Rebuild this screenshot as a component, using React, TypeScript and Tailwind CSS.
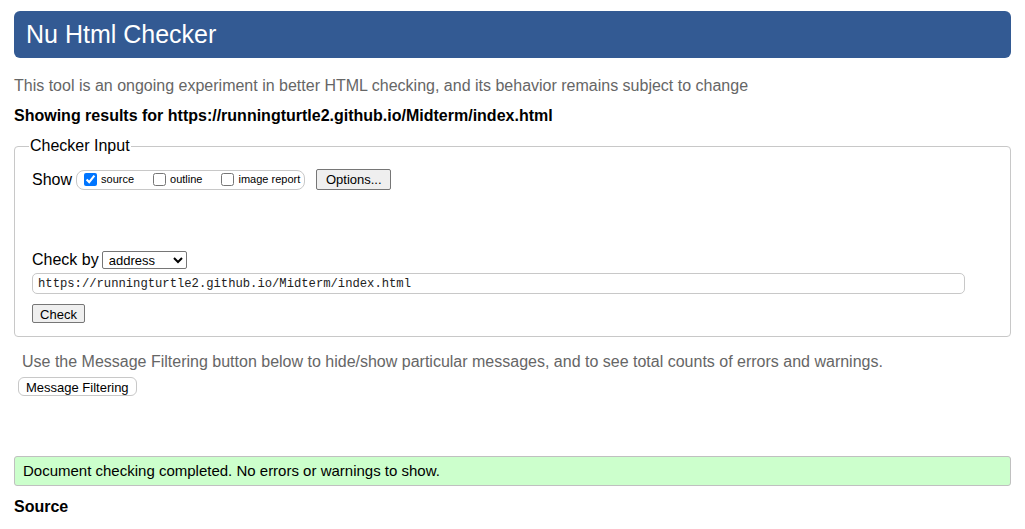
import React, { useState } from 'react';

const sans = { fontFamily: '"Liberation Sans", Arial, sans-serif' };

const ShowToggles: React.FC = () => {
    const [show, setShow] = useState({ source: true, outline: false, image: false });

    return (
        <span className="inline-flex h-[20px] items-center gap-[19px] rounded-[8px] border border-[#c8c8c8] pl-[7px] pr-[4px] text-[11px] text-black">
            <label className="flex items-center gap-[4px]">
                <input type="checkbox" className="m-0 h-[13px] w-[13px] accent-[#0075ff]" checked={show.source} onChange={e => setShow({ ...show, source: e.target.checked })} />
                source
            </label>
            <label className="flex items-center gap-[4px]">
                <input type="checkbox" className="m-0 h-[13px] w-[13px]" checked={show.outline} onChange={e => setShow({ ...show, outline: e.target.checked })} />
                outline
            </label>
            <label className="flex items-center gap-[4px]">
                <input type="checkbox" className="m-0 h-[13px] w-[13px]" checked={show.image} onChange={e => setShow({ ...show, image: e.target.checked })} />
                image report
            </label>
        </span>
    );
};

const App: React.FC = () => {
    const [url, setUrl] = useState('https://runningturtle2.github.io/Midterm/index.html');

    return (
        <div className="min-h-[529px] bg-white px-[14px] pt-[11px] text-[16px] text-black" style={sans}>
            <h1 className="flex h-[47px] items-center rounded-[6px] bg-[#335a93] pl-[12px] text-[25px] text-white">
                Nu Html Checker
            </h1>

            <p className="mt-[18px] leading-[19px] text-[#666]">
                This tool is an ongoing experiment in better HTML checking, and its behavior remains subject to change
            </p>
            <p className="mt-[11px] font-bold leading-[19px]">
                Showing results for https://runningturtle2.github.io/Midterm/index.html
            </p>

            <fieldset className="mt-[12px] rounded-[4px] border border-[#c8c8c8] px-[17px] pb-[13px] pt-[14px]">
                <legend className="-ml-[3px] px-px leading-[18px]">Checker Input</legend>

                <div className="flex h-[21px] items-center">
                    <span className="mr-[4px]">Show</span>
                    <ShowToggles />
                    <button className="ml-[11px] h-[21px] w-[75px] rounded-[2px] border border-[#767676] bg-[#efefef] text-[13px]">
                        Options...
                    </button>
                </div>

                <div className="mt-[61px] flex h-[18px] items-center">
                    <span className="mr-[3px]">Check by</span>
                    <select className="h-[18px] w-[85px] rounded-[2px] border border-[#767676] bg-white pl-[2px] text-[13px]">
                        <option>address</option>
                        <option>file upload</option>
                        <option>text input</option>
                    </select>
                </div>

                <input
                    className="mt-[4px] block h-[21px] w-[933px] rounded-[5px] border border-[#c8c8c8] px-[5px] text-[12.2px] text-[#222]"
                    style={{ fontFamily: '"Liberation Mono", "Courier New", monospace' }}
                    value={url}
                    onChange={e => setUrl(e.target.value)}
                />

                <button className="mt-[10px] block h-[19px] w-[53px] rounded-[2px] border border-[#767676] bg-[#efefef] text-[13px]">
                    Check
                </button>
            </fieldset>

            <p className="ml-[8px] mt-[15px] leading-[19px] text-[#666]">
                Use the Message Filtering button below to hide/show particular messages, and to see total counts of errors and warnings.
            </p>
            <button className="ml-[4px] mt-[6px] h-[19px] rounded-[6px] border border-[#c8c8c8] bg-white px-[7px] text-[13px]">
                Message Filtering
            </button>

            <div className="mt-[57px] flex h-[30px] items-center rounded-[3px] border border-[#c0c0c0] bg-[#ccffcc] pl-[8px] text-[15px]">
                Document checking completed. No errors or warnings to show.
            </div>

            <h2 className="mt-[11px] font-bold leading-[19px]">Source</h2>
        </div>
    );
};

export default App;
